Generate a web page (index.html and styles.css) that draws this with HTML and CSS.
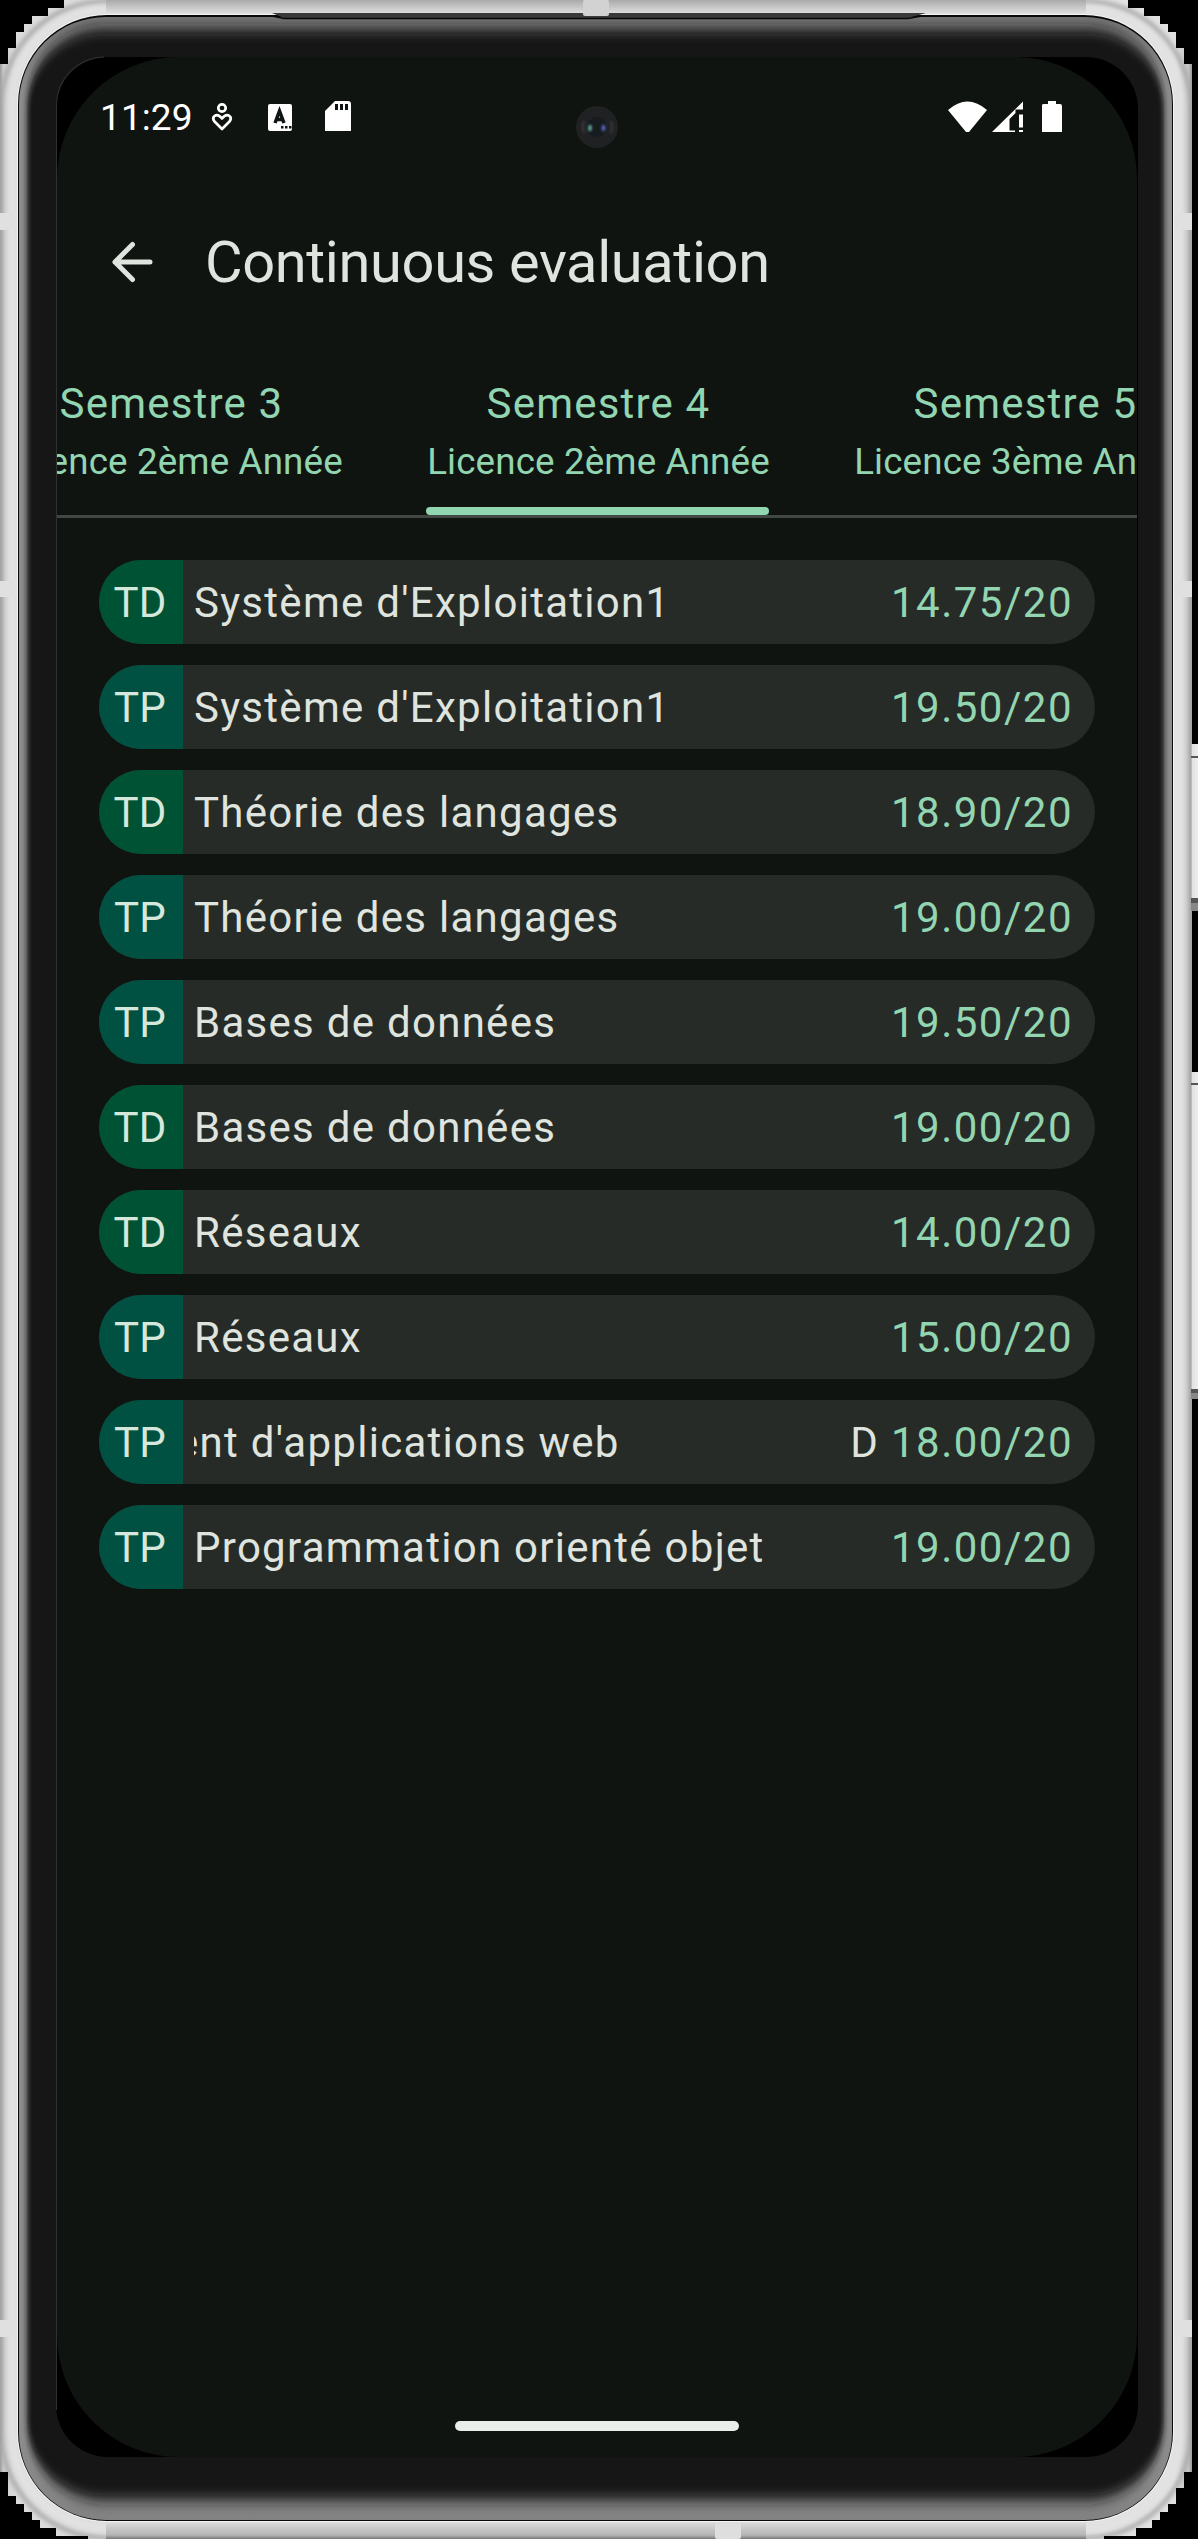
FILE: index.html
```
<!DOCTYPE html>
<html lang="en">
<head>
<meta charset="utf-8">
<title>Continuous evaluation</title>
<link rel="stylesheet" href="styles.css">
</head>
<body>
<div class="device">
  <svg class="shell" viewBox="0 0 1198 2539" aria-hidden="true">
    <defs>
      <linearGradient id="side" x1="0" x2="1192" y1="0" y2="0" gradientUnits="userSpaceOnUse">
        <stop offset="0" stop-color="#999"/><stop offset=".003" stop-color="#cfcfcf"/><stop offset=".013" stop-color="#dcdcdc"/>
        <stop offset=".986" stop-color="#e2e2e2"/><stop offset=".992" stop-color="#d2d2d2"/><stop offset=".997" stop-color="#c8c8c8"/><stop offset="1" stop-color="#999"/>
      </linearGradient>
      <filter id="soft" x="-5%" y="-5%" width="110%" height="110%"><feGaussianBlur stdDeviation="2.8 7"/></filter>
      <filter id="blend" x="-5%" y="-5%" width="110%" height="110%"><feGaussianBlur stdDeviation="2"/></filter>
      <clipPath id="glass"><rect x="19" y="17" width="1153" height="2503" rx="87"/></clipPath>
      <clipPath id="body"><path d="M0 64H8V48H16V32H24V24H32V16H48V8H64V0H1128V8H1144V16H1160V24H1168V32H1176V48H1184V64H1192V2472H1184V2488H1176V2504H1168V2512H1160V2520H1152V2528H1136V2536H1104V2539H88V2536H56V2528H40V2520H32V2512H24V2504H16V2496H8V2472H0Z"/></clipPath>
      <linearGradient id="topbar" x1="0" x2="0" y1="0" y2="1"><stop offset="0" stop-color="#aaa"/><stop offset="1" stop-color="#f0f0f0"/></linearGradient>
      <linearGradient id="botbar" x1="0" x2="0" y1="0" y2="1"><stop offset="0" stop-color="#eee"/><stop offset=".2" stop-color="#d6d6d6"/><stop offset=".8" stop-color="#b4b4b4"/><stop offset="1" stop-color="#777"/></linearGradient>
      <linearGradient id="lit" x1="0" x2="0" y1="0" y2="1"><stop offset="0" stop-color="#757575"/><stop offset=".03" stop-color="#8c8c8c"/><stop offset=".97" stop-color="#8c8c8c"/><stop offset="1" stop-color="#828282"/></linearGradient>
      <linearGradient id="key"><stop offset="0" stop-color="#aaa"/><stop offset=".2" stop-color="#e2e2e2"/><stop offset="1" stop-color="#eee"/></linearGradient>
    </defs>
    <g clip-path="url(#body)">
      <rect width="1192" height="2539" fill="url(#side)"/>
      <g filter="url(#blend)">
        <rect x="1" y="1" width="1190" height="2537" rx="106" fill="none" stroke="#a6a6a6" stroke-width="4"/>
        <rect x="12" y="9" width="1168" height="2519" rx="95" fill="none" stroke="#e2e2e2" stroke-width="8"/>
      </g>
      <path d="M106 0H1086V18H106Z" fill="url(#topbar)"/>
      <path d="M106 2520H1086V2539H106Z" fill="url(#botbar)"/>
      <g fill="#e0e0e0">
        <rect x="0" y="213" width="18" height="17"/><rect x="0" y="581" width="18" height="16"/><rect x="0" y="2320" width="18" height="17"/>
        <rect x="1174" y="213" width="18" height="17"/><rect x="1174" y="581" width="18" height="16"/><rect x="1174" y="2320" width="18" height="17"/>
      </g>
    </g>
    <rect x="17" y="14" width="1157" height="2508" rx="90" fill="#f4f4f4"/>
    <rect x="18" y="15" width="1155" height="2506" rx="89" fill="#080808"/>
    <g clip-path="url(#glass)">
      <rect x="19" y="17" width="1153" height="2503" fill="url(#lit)"/>
      <rect x="27" y="29" width="1137" height="2471" rx="78" fill="#151515" filter="url(#soft)"/>
    </g>
    <path d="M272 13H926L908 18H284Z" fill="#3a3a3a"/>
    <path d="M272 16L284 18.500H908L922 16" fill="none" stroke="#080808" stroke-width="1.5"/>
    <rect x="583" y="0" width="26" height="16" rx="2" fill="#d2d2d2"/>
    <rect x="715" y="2523" width="26" height="16" rx="2" fill="#dedede"/>
    <rect x="56" y="57" width="1082" height="2400" rx="52" fill="#000"/>
    <path d="M56.5 2410V105A48 48 0 0 1 104 57" fill="none" stroke="#3a3d3b" stroke-width=".8"/>
    <g fill="url(#key)">
      <rect x="1191" y="744" width="7" height="156"/><rect x="1191" y="1072" width="7" height="318"/>
    </g>
    <g fill="#555">
      <rect x="1191" y="756" width="7" height="2"/><rect x="1191" y="1083" width="7" height="2"/>
      <rect x="1191" y="898" width="7" height="5"/><rect x="1191" y="1389" width="7" height="4"/>
    </g>
    <g fill="#888">
      <rect x="1191" y="903" width="7" height="8"/><rect x="1191" y="1393" width="7" height="6"/>
    </g>
  </svg>

  <main class="screen">
    <header class="status">
      <span class="clock">11:29</span>
      <svg class="notices" width="160" height="34" viewBox="0 0 160 34">
        <g fill="none" stroke="#fff" stroke-width="2.7"><circle cx="19" cy="8" r="3.7"/><path d="M19 29L11.500 21.500Q9 18 11.500 16Q15 13.500 19 18.500Q23 13.500 26.500 16Q29 18 26.500 21.500Z" stroke-linejoin="round"/></g>
        <rect x="65" y="4" width="24" height="27" rx="2" fill="#fff"/>
        <path d="M72 23L76.500 11L81 23M73.500 19.500H79.500" fill="none" stroke="#101411" stroke-width="3.500"/>
        <path d="M78 26h2.500v2.500h-2.500zM82 26h2.500v2.500h-2.500zM86 26h2.500v2.500h-2.500z" fill="#101411"/>
        <path d="M122 11L132 1H145Q148 1 148 4V31H122Z" fill="#fff"/>
        <path d="M132 4h3v6h-3zM137 4h3v6h-3zM142 4h3v6h-3z" fill="#101411"/>
      </svg>
      <svg class="system" width="116" height="32" viewBox="0 0 116 32">
        <g fill="#fff"><path d="M0 9Q19.500 -8 39 9L21 31H18Z"/><path d="M44 31L75 .5V8.500H67.500V12L61.500 18V29.500H67V31Z"/><path d="M71 13.500h4v13h-4zM71 29h4v2h-4z"/><path d="M94 4Q94 3 96 3H100V0H108V3H112Q114 3 114 5V31H94Z"/></g>
      </svg>
    </header>
    <svg class="camera" width="42" height="42" viewBox="0 0 42 42">
      <defs><filter id="lens"><feGaussianBlur stdDeviation=".8"/></filter></defs>
      <circle cx="21" cy="21" r="21" fill="#202122"/>
      <circle cx="21" cy="21" r="10" fill="#161b20"/>
      <g filter="url(#lens)"><ellipse cx="14" cy="22" rx="1.900" ry="3.200" fill="#5ba396"/><ellipse cx="27.500" cy="22" rx="1.900" ry="3.200" fill="#5465b8"/>
      <path d="M8 15Q6 21 8 27M35 15Q37 21 35 27" fill="none" stroke="#3a3b3d" stroke-width="2"/></g>
    </svg>

    <div class="appbar">
      <svg width="42" height="42" viewBox="0 0 42 42"><path d="M39 21H4M21.500 3.500L4 21L21.500 38.500" fill="none" stroke="#dfe4de" stroke-width="5" stroke-linecap="round" stroke-linejoin="round"/></svg>
      <h1>Continuous evaluation</h1>
    </div>

    <nav class="tabs">
      <div class="tab"><b>Semestre 3</b><span>Licence 2ème Année</span></div>
      <div class="tab active"><b>Semestre 4</b><span>Licence 2ème Année</span></div>
      <div class="tab"><b>Semestre 5</b><span>Licence 3ème Année</span></div>
    </nav>

    <ul class="marks">
      <li><i class="td">TD</i><p>Système d'Exploitation1</p><strong>14.75/20</strong></li>
      <li><i class="tp">TP</i><p>Système d'Exploitation1</p><strong>19.50/20</strong></li>
      <li><i class="td">TD</i><p>Théorie des langages</p><strong>18.90/20</strong></li>
      <li><i class="tp">TP</i><p>Théorie des langages</p><strong>19.00/20</strong></li>
      <li><i class="tp">TP</i><p>Bases de données</p><strong>19.50/20</strong></li>
      <li><i class="td">TD</i><p>Bases de données</p><strong>19.00/20</strong></li>
      <li><i class="td">TD</i><p>Réseaux</p><strong>14.00/20</strong></li>
      <li><i class="tp">TP</i><p>Réseaux</p><strong>15.00/20</strong></li>
      <li><i class="tp">TP</i><p class="marquee"><span>ent d'applications web</span><span>D</span></p><strong>18.00/20</strong></li>
      <li><i class="tp">TP</i><p>Programmation orienté objet</p><strong>19.00/20</strong></li>
    </ul>
    <div class="home"></div>
  </main>
</div>
</body>
</html>
```
FILE: styles.css
```
* { box-sizing: border-box; margin: 0; padding: 0; }
body { background: #000; font-family: Roboto, "Noto Sans", sans-serif; color: #dfe4de; }
.device { position: relative; width: 1198px; height: 2539px; padding: 57px 61px 82px 57px; overflow: hidden; }
.shell { position: absolute; inset: 0; width: 1198px; height: 2539px; }
.screen { position: relative; width: 1080px; height: 2400px; background: #101411; border-radius: 122px; overflow: hidden; display: flex; flex-direction: column; }

.status { height: 120px; padding: 0 73px 0 43px; display: flex; align-items: center; color: #fff; }
.clock { font-size: 37px; width: 93px; letter-spacing: .1px; white-space: nowrap; }
.notices { margin-left: 10px; }
.system { margin-left: auto; }
.camera { position: absolute; left: 519px; top: 49px; }

.appbar { height: 167px; padding: 3px 0 0 54px; display: flex; align-items: center; gap: 52px; }
.appbar h1 { font-size: 57.75px; font-weight: 400; line-height: 74px; letter-spacing: -.36px; white-space: nowrap; }

.tabs { height: 174px; margin-left: -99px; display: flex; border-bottom: 3px solid #414843; flex-shrink: 0; }
.tab { position: relative; flex: 0 0 427px; height: 171px; padding-top: 28px; display: flex; flex-direction: column; align-items: center; color: #92d5b1; white-space: nowrap; }
.tab b { font-size: 42px; font-weight: 400; line-height: 63px; letter-spacing: 1.2px; }
.tab span { font-size: 36.75px; line-height: 53.5px; letter-spacing: .14px; }
.tab.active::after { content: ""; position: absolute; bottom: 0; left: 41px; width: 343px; height: 8px; border-radius: 8px; background: #92d5b1; }

.marks { list-style: none; padding: 42px; display: flex; flex-direction: column; gap: 21px; }
.marks li { height: 84px; display: flex; align-items: center; border-radius: 42px; overflow: hidden; background: #272b28; font-size: 42px; line-height: 63px; letter-spacing: 1.28px; padding-right: 22px; }
.marks i { width: 84px; height: 84px; line-height: 85px; padding-right: 2px; text-align: center; font-style: normal; letter-spacing: .2px; color: #d6e8dc; }
.td { background: #005234; }
.tp { background: #005142; }
.marks p { flex: 1; margin-left: 11px; overflow: hidden; white-space: nowrap; }
.marquee { display: flex; justify-content: space-between; padding-right: 12px; }
.marquee span:first-child { margin-left: -18px; }
.marks strong { font-weight: 400; letter-spacing: 1.5px; color: #92d5b1; }
.home { width: 284px; height: 10px; border-radius: 5px; background: #e9eeea; margin: auto auto 26px; }
```
